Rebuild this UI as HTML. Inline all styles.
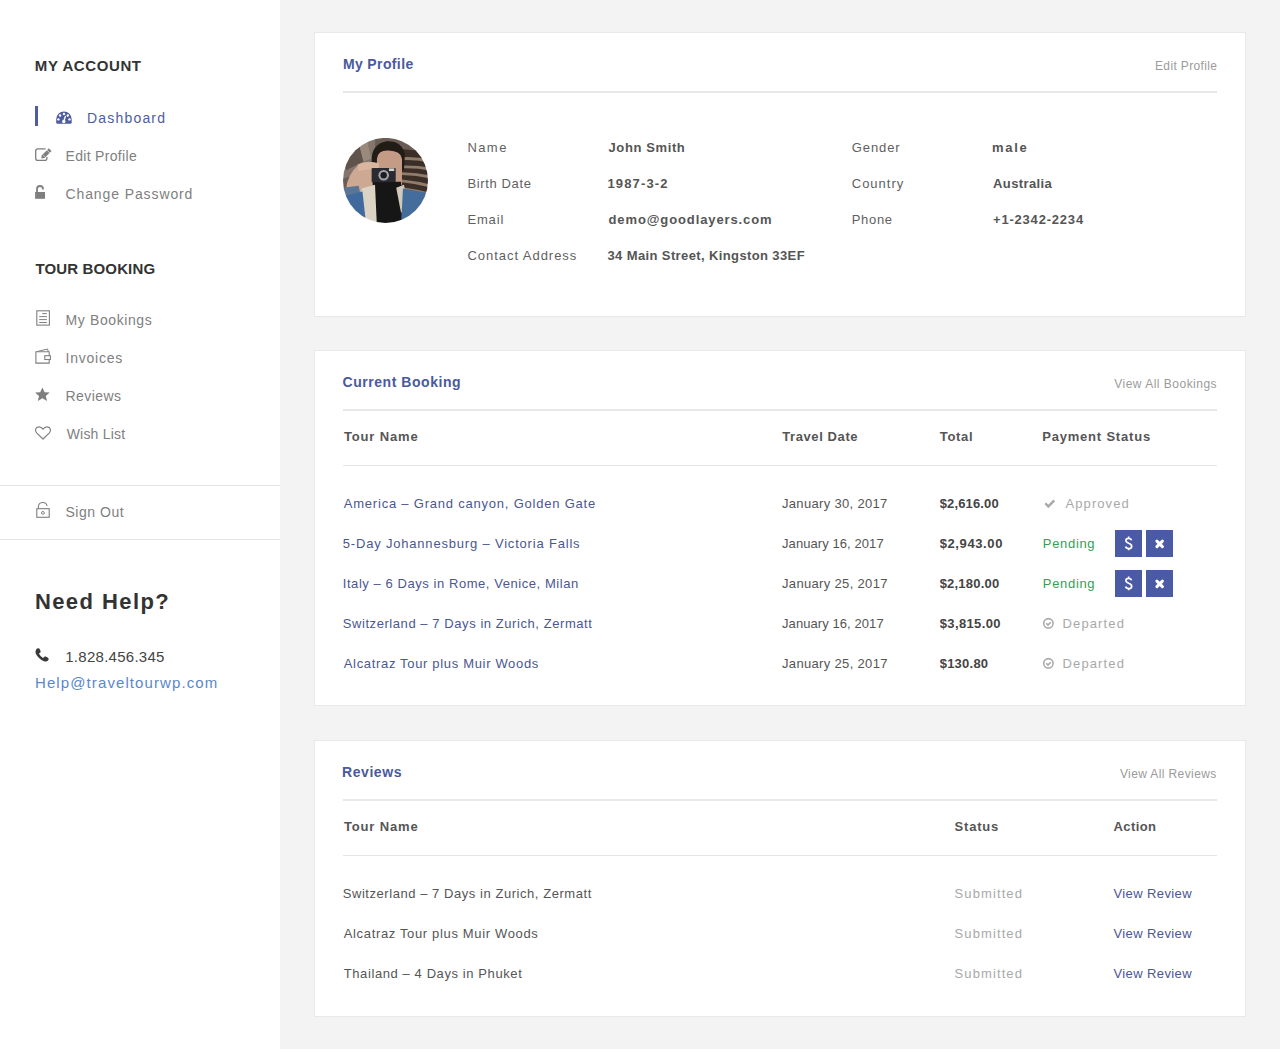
<!DOCTYPE html>
<html><head><meta charset="utf-8"><title>Dashboard</title>
<style>
html,body{margin:0;padding:0}
body{width:1280px;height:1049px;overflow:hidden;background:#f3f3f3;position:relative;font-family:"Liberation Sans",sans-serif}
.t{position:absolute;white-space:nowrap;line-height:1}
.i{position:absolute}
.sb{position:absolute;left:0;top:0;width:280px;height:1049px;background:#fff}
.hl{position:absolute;left:0;width:280px;height:1px;background:#e4e4e4}
.card{position:absolute;left:314px;width:930px;background:#fff;border:1px solid #e9e9e9}
.ln2{position:absolute;left:343px;width:874px;height:2px;background:#e8e8e8}
.ln1{position:absolute;left:343px;width:874px;height:1px;background:#e6e6e6}
</style></head><body>

<div class="sb"></div>
<div class="hl" style="top:485px"></div>
<div class="hl" style="top:539px"></div>
<div class="card" style="top:32px;height:283px"></div>
<div class="card" style="top:350px;height:354px"></div>
<div class="card" style="top:740px;height:275px"></div>
<div class="ln2" style="top:91px"></div>
<div class="ln2" style="top:409px"></div>
<div class="ln1" style="top:465px"></div>
<div class="ln2" style="top:799px"></div>
<div class="ln1" style="top:855px"></div>


<svg class="i" style="left:343px;top:138px" width="85" height="85" viewBox="88 85 882 882">
 <defs><clipPath id="cc"><circle cx="529" cy="525" r="441"/></clipPath><filter id="bl" x="-5%" y="-5%" width="110%" height="110%"><feGaussianBlur stdDeviation="7"/></filter></defs>
 <g clip-path="url(#cc)"><g filter="url(#bl)">
  <rect x="0" y="0" width="1100" height="1100" fill="#6a5d55"/>
  <path d="M60 60 L420 60 L420 380 L60 520 Z" fill="#84766c"/>
  <path d="M90 250 L260 170 L300 330 L120 420 Z" fill="#5e524b"/>
  <path d="M240 90 L330 80 L380 300 L300 330 Z" fill="#9a8a7e"/>
  <path d="M690 200 L1000 230 L1000 800 L690 720 Z" fill="#3a2d28"/>
  <g stroke="#8f7b6b" stroke-width="30"><path d="M700 300 Q850 290 1000 330"/><path d="M700 385 Q850 380 1000 410"/><path d="M700 455 Q850 460 1000 490"/><path d="M700 530 Q850 545 1000 585"/><path d="M700 610 Q850 630 1000 670"/></g>
  <path d="M385 330 Q380 150 540 120 Q700 110 730 260 L720 420 L395 420 Z" fill="#221a18"/>
  <path d="M440 300 Q450 210 560 215 Q690 220 700 300 L700 570 L440 570 Z" fill="#c49c86"/>
  <path d="M120 620 Q130 470 250 360 Q330 310 450 350 L470 560 Q360 610 250 660 Z" fill="#cda892"/>
  <path d="M240 360 Q330 320 460 345 L460 420 Q350 400 250 430 Z" fill="#d8b6a0"/>
  <path d="M88 600 L250 580 L280 720 L88 760 Z" fill="#5a7596"/>
  <path d="M395 540 L690 540 L700 1000 L420 1000 Z" fill="#141416"/>
  <path d="M280 610 L420 570 L440 1000 L300 1000 Z" fill="#dcd3c4"/>
  <path d="M640 600 L720 570 L770 820 L690 860 Z" fill="#d2c9b9"/>
  <path d="M60 700 L290 640 L330 1000 L60 1000 Z" fill="#3f6b9d"/>
  <path d="M710 610 L1000 660 L1000 1000 L690 1000 Z" fill="#446d9c"/>
  <rect x="385" y="395" width="250" height="150" rx="10" fill="#2a2a30"/>
  <rect x="565" y="400" width="55" height="28" fill="#d2d2d2"/>
  <circle cx="510" cy="472" r="55" fill="#a4a4a8"/>
  <circle cx="510" cy="472" r="33" fill="#1c1c20"/>
 </g></g>
</svg>


<svg class="i" style="left:0;top:0" width="1280" height="1049" viewBox="0 0 1280 1049">
 <!-- active bar -->
 <rect x="35" y="106" width="3" height="20" fill="#4e5d9f"/>
 <!-- dashboard gauge -->
 <path d="M56.2 119.3 A7.75 7.75 0 0 1 71.7 119.3 V122.6 Q71.7 123.8 70.5 123.8 H57.4 Q56.2 123.8 56.2 122.6 Z" fill="#4e5d9f"/>
 <g fill="#fff"><circle cx="63.95" cy="113.9" r="1.2"/><circle cx="60.1" cy="115.5" r="1.2"/><circle cx="67.8" cy="115.5" r="1.2"/><circle cx="58.4" cy="119.4" r="1.2"/><circle cx="69.5" cy="119.4" r="1.2"/><circle cx="63.8" cy="121.5" r="1.7"/></g>
 <path d="M63.8 121.3 L65.4 116.3" stroke="#fff" stroke-width="1.3" stroke-linecap="round"/>
 <!-- edit -->
 <path d="M45.6 148.9 H37.9 A2.2 2.2 0 0 0 35.7 151.1 V158.2 A2.2 2.2 0 0 0 37.9 160.4 H44.7 A2.2 2.2 0 0 0 46.9 158.2 V157" fill="none" stroke="#7f7f7f" stroke-width="1.3"/>
 <path d="M41.2 158.6 L41.86 155.26 L48.86 148.26 L51.54 150.94 L44.54 157.94 Z" fill="#7f7f7f"/>
 <path d="M46.9 150.1 L49.7 152.9" stroke="#fff" stroke-width="0.7"/><path d="M42.6 154.5 L45.3 157.2" stroke="#fff" stroke-width="0.5"/>
 <!-- unlock filled -->
 <rect x="35.1" y="192" width="9.9" height="6.8" fill="#7f7f7f"/>
 <path d="M37 192.3 V189 A3 3 0 0 1 43 189 V189.6" fill="none" stroke="#7f7f7f" stroke-width="1.8"/>
 <!-- bookings file -->
 <rect x="36.8" y="310.8" width="12.6" height="14.3" fill="none" stroke="#7f7f7f" stroke-width="1.1"/>
 <g stroke="#7f7f7f" stroke-width="1"><path d="M42.2 313.6 H46.9"/><path d="M39.2 316.6 H46.9"/><path d="M39.2 319.6 H46.9"/><path d="M39.2 322.5 H46.9"/></g>
 <!-- wallet -->
 <path d="M49.2 355.6 V351.7 H35.9 V363.1 H49.2 V359.4" fill="none" stroke="#7f7f7f" stroke-width="1.1"/>
 <path d="M37 351.6 L47.6 349 L48.2 351.6" fill="none" stroke="#7f7f7f" stroke-width="1"/>
 <rect x="44.8" y="355.7" width="5.6" height="3.8" fill="none" stroke="#7f7f7f" stroke-width="1.1"/>
 <!-- star -->
 <path d="M42.4 387.4 L44.6 392.2 L49.7 392.6 L45.8 395.9 L47 401.1 L42.4 398.3 L37.8 401.1 L39 395.9 L35.1 392.6 L40.2 392.2 Z" fill="#7f7f7f"/>
 <!-- heart -->
 <path d="M43 439 L36.6 432.9 C34.6 430.9 35.4 427 38.8 426.8 C40.8 426.7 42.2 428 43 429.2 C43.8 428 45.2 426.7 47.2 426.8 C50.6 427 51.4 430.9 49.4 432.9 Z" fill="none" stroke="#7f7f7f" stroke-width="1.2" stroke-linejoin="round"/>
 <!-- sign out -->
 <rect x="36.8" y="508.7" width="12.4" height="8.6" fill="none" stroke="#7f7f7f" stroke-width="1.1"/>
 <path d="M38.4 508.5 V506.6 A4.4 4.4 0 0 1 47.1 506" fill="none" stroke="#7f7f7f" stroke-width="1.1"/>
 <circle cx="42.9" cy="512.9" r="1.4" fill="none" stroke="#7f7f7f" stroke-width="1"/>
 <!-- phone -->
 <g fill="#3a3a3a">
  <path d="M36.3 649.2 Q37.5 647.6 39.3 648.6 L40.6 650.9 Q41 652.2 39.6 653.1 L38.9 653.6 Q40.3 656.6 43 658.1 L43.6 657.4 Q44.5 656.1 45.8 656.6 L48.3 658 Q49.3 659.2 48 660.6 Q46.5 662.1 44 661.3 Q38.5 659 35.7 653.5 Q35 651 36.3 649.2 Z"/>
 </g>
 <!-- approved check -->
 <path d="M1045.3 503.2 L1048.3 506.4 L1054.3 500.3" fill="none" stroke="#a9a9a9" stroke-width="2.4"/>
 <!-- departed -->
 <g fill="none" stroke="#a9a9a9"><circle cx="1048.4" cy="623.3" r="4.7" stroke-width="1.6"/><path d="M1046.3 623.3 L1048 625 L1050.7 622.2" stroke-width="1.6"/>
 <circle cx="1048.4" cy="663.3" r="4.7" stroke-width="1.6"/><path d="M1046.3 663.3 L1048 665 L1050.7 662.2" stroke-width="1.6"/></g>
 <!-- buttons -->
 <g fill="#4a5aa5"><rect x="1115" y="530" width="27" height="27"/><rect x="1146" y="530" width="27" height="27"/><rect x="1115" y="570" width="27" height="27"/><rect x="1146" y="570" width="27" height="27"/></g>
 <path d="M1131.6 540.2 C1131.2 538.9 1130 538.3 1128.7 538.3 C1127 538.3 1125.9 539.2 1125.9 540.5 C1125.9 542.0 1127.2 542.6 1128.7 543.2 C1130.4 543.8 1131.7 544.5 1131.7 546.2 C1131.7 547.6 1130.5 548.6 1128.7 548.6 C1127.2 548.6 1126 547.9 1125.6 546.6 M1128.7 536.6 V538.4 M1128.7 548.5 V550.3" fill="none" stroke="#fff" stroke-width="1.7"/>
 <path d="M1131.6 580.2 C1131.2 578.9 1130 578.3 1128.7 578.3 C1127 578.3 1125.9 579.2 1125.9 580.5 C1125.9 582.0 1127.2 582.6 1128.7 583.2 C1130.4 583.8 1131.7 584.5 1131.7 586.2 C1131.7 587.6 1130.5 588.6 1128.7 588.6 C1127.2 588.6 1126 587.9 1125.6 586.6 M1128.7 576.6 V578.4 M1128.7 588.5 V590.3" fill="none" stroke="#fff" stroke-width="1.7"/>
 <g stroke="#fff" stroke-width="3" stroke-linecap="round"><path d="M1156.9 541.1 L1162.4 546.6 M1162.4 541.1 L1156.9 546.6"/><path d="M1156.9 581.1 L1162.4 586.6 M1162.4 581.1 L1156.9 586.6"/></g>
</svg>

<div class="t" style="left:34.80px;top:58px;font-size:15px;font-weight:700;color:#333333;letter-spacing:0.600px">MY ACCOUNT</div><div class="t" style="left:87.00px;top:111px;font-size:14px;font-weight:400;color:#4e5d9f;letter-spacing:1.188px">Dashboard</div><div class="t" style="left:65.50px;top:149px;font-size:14px;font-weight:400;color:#808080;letter-spacing:0.318px">Edit Profile</div><div class="t" style="left:65.50px;top:187px;font-size:14px;font-weight:400;color:#808080;letter-spacing:0.893px">Change Password</div><div class="t" style="left:35.50px;top:261px;font-size:15px;font-weight:700;color:#333333;letter-spacing:0.136px">TOUR BOOKING</div><div class="t" style="left:65.60px;top:313px;font-size:14px;font-weight:400;color:#808080;letter-spacing:0.600px">My Bookings</div><div class="t" style="left:65.50px;top:351px;font-size:14px;font-weight:400;color:#808080;letter-spacing:0.786px">Invoices</div><div class="t" style="left:65.50px;top:389px;font-size:14px;font-weight:400;color:#808080;letter-spacing:0.417px">Reviews</div><div class="t" style="left:66.70px;top:427px;font-size:14px;font-weight:400;color:#808080;letter-spacing:0.200px">Wish List</div><div class="t" style="left:65.40px;top:505px;font-size:14px;font-weight:400;color:#808080;letter-spacing:0.543px">Sign Out</div><div class="t" style="left:34.90px;top:591px;font-size:22px;font-weight:700;color:#333333;letter-spacing:1.422px">Need Help?</div><div class="t" style="left:65.25px;top:649px;font-size:15px;font-weight:400;color:#444444;letter-spacing:0.271px">1.828.456.345</div><div class="t" style="left:35.00px;top:675px;font-size:15px;font-weight:400;color:#5b87cc;letter-spacing:1.100px">Help@traveltourwp.com</div><div class="t" style="left:342.90px;top:57px;font-size:14px;font-weight:700;color:#4a5a9c;letter-spacing:0.378px">My Profile</div><div class="t" style="left:1155.00px;top:60px;font-size:12px;font-weight:400;color:#9b9b9b;letter-spacing:0.364px">Edit Profile</div><div class="t" style="left:467.40px;top:141px;font-size:13px;font-weight:400;color:#5f5f5f;letter-spacing:1.433px">Name</div><div class="t" style="left:608.50px;top:141px;font-size:13px;font-weight:700;color:#555555;letter-spacing:0.611px">John Smith</div><div class="t" style="left:467.40px;top:177px;font-size:13px;font-weight:400;color:#5f5f5f;letter-spacing:0.633px">Birth Date</div><div class="t" style="left:607.50px;top:177px;font-size:13px;font-weight:700;color:#555555;letter-spacing:1.129px">1987-3-2</div><div class="t" style="left:467.40px;top:213px;font-size:13px;font-weight:400;color:#5f5f5f;letter-spacing:0.850px">Email</div><div class="t" style="left:608.50px;top:213px;font-size:13px;font-weight:700;color:#555555;letter-spacing:0.894px">demo@goodlayers.com</div><div class="t" style="left:467.40px;top:249px;font-size:13px;font-weight:400;color:#5f5f5f;letter-spacing:0.968px">Contact Address</div><div class="t" style="left:607.50px;top:249px;font-size:13px;font-weight:700;color:#555555;letter-spacing:0.382px">34 Main Street, Kingston 33EF</div><div class="t" style="left:851.75px;top:141px;font-size:13px;font-weight:400;color:#5f5f5f;letter-spacing:0.910px">Gender</div><div class="t" style="left:992.00px;top:141px;font-size:13px;font-weight:700;color:#555555;letter-spacing:1.700px">male</div><div class="t" style="left:851.75px;top:177px;font-size:13px;font-weight:400;color:#5f5f5f;letter-spacing:0.992px">Country</div><div class="t" style="left:993.00px;top:177px;font-size:13px;font-weight:700;color:#555555;letter-spacing:0.400px">Australia</div><div class="t" style="left:851.75px;top:213px;font-size:13px;font-weight:400;color:#5f5f5f;letter-spacing:0.688px">Phone</div><div class="t" style="left:993.00px;top:213px;font-size:13px;font-weight:700;color:#555555;letter-spacing:0.800px">+1-2342-2234</div><div class="t" style="left:342.50px;top:375px;font-size:14px;font-weight:700;color:#4a5a9c;letter-spacing:0.550px">Current Booking</div><div class="t" style="left:1114.25px;top:378px;font-size:12px;font-weight:400;color:#9b9b9b;letter-spacing:0.491px">View All Bookings</div><div class="t" style="left:344.00px;top:430px;font-size:13px;font-weight:700;color:#555555;letter-spacing:0.837px">Tour Name</div><div class="t" style="left:782.20px;top:430px;font-size:13px;font-weight:700;color:#555555;letter-spacing:0.600px">Travel Date</div><div class="t" style="left:939.70px;top:430px;font-size:13px;font-weight:700;color:#555555;letter-spacing:0.725px">Total</div><div class="t" style="left:1042.20px;top:430px;font-size:13px;font-weight:700;color:#555555;letter-spacing:0.800px">Payment Status</div><div class="t" style="left:343.75px;top:497px;font-size:13px;font-weight:400;color:#4b5790;letter-spacing:0.787px">America – Grand canyon, Golden Gate</div><div class="t" style="left:782.00px;top:497px;font-size:13px;font-weight:400;color:#555555;letter-spacing:0.320px">January 30, 2017</div><div class="t" style="left:939.70px;top:497px;font-size:13px;font-weight:700;color:#444444;letter-spacing:0.144px">$2,616.00</div><div class="t" style="left:342.75px;top:537px;font-size:13px;font-weight:400;color:#4b5790;letter-spacing:0.810px">5-Day Johannesburg – Victoria Falls</div><div class="t" style="left:782.00px;top:537px;font-size:13px;font-weight:400;color:#555555;letter-spacing:0.080px">January 16, 2017</div><div class="t" style="left:939.70px;top:537px;font-size:13px;font-weight:700;color:#444444;letter-spacing:0.612px">$2,943.00</div><div class="t" style="left:342.75px;top:577px;font-size:13px;font-weight:400;color:#4b5790;letter-spacing:0.560px">Italy – 6 Days in Rome, Venice, Milan</div><div class="t" style="left:782.00px;top:577px;font-size:13px;font-weight:400;color:#555555;letter-spacing:0.333px">January 25, 2017</div><div class="t" style="left:939.70px;top:577px;font-size:13px;font-weight:700;color:#444444;letter-spacing:0.200px">$2,180.00</div><div class="t" style="left:342.75px;top:617px;font-size:13px;font-weight:400;color:#4b5790;letter-spacing:0.567px">Switzerland – 7 Days in Zurich, Zermatt</div><div class="t" style="left:782.00px;top:617px;font-size:13px;font-weight:400;color:#555555;letter-spacing:0.080px">January 16, 2017</div><div class="t" style="left:939.70px;top:617px;font-size:13px;font-weight:700;color:#444444;letter-spacing:0.375px">$3,815.00</div><div class="t" style="left:343.75px;top:657px;font-size:13px;font-weight:400;color:#4b5790;letter-spacing:0.670px">Alcatraz Tour plus Muir Woods</div><div class="t" style="left:782.00px;top:657px;font-size:13px;font-weight:400;color:#555555;letter-spacing:0.333px">January 25, 2017</div><div class="t" style="left:939.70px;top:657px;font-size:13px;font-weight:700;color:#444444;letter-spacing:0.233px">$130.80</div><div class="t" style="left:1065.50px;top:497px;font-size:13px;font-weight:400;color:#a9a9a9;letter-spacing:1.086px">Approved</div><div class="t" style="left:1042.80px;top:537px;font-size:13px;font-weight:400;color:#34a052;letter-spacing:0.683px">Pending</div><div class="t" style="left:1042.80px;top:577px;font-size:13px;font-weight:400;color:#34a052;letter-spacing:0.683px">Pending</div><div class="t" style="left:1062.50px;top:617px;font-size:13px;font-weight:400;color:#a9a9a9;letter-spacing:1.129px">Departed</div><div class="t" style="left:1062.50px;top:657px;font-size:13px;font-weight:400;color:#a9a9a9;letter-spacing:1.129px">Departed</div><div class="t" style="left:342.00px;top:765px;font-size:14px;font-weight:700;color:#4a5a9c;letter-spacing:0.567px">Reviews</div><div class="t" style="left:1119.90px;top:768px;font-size:12px;font-weight:400;color:#9b9b9b;letter-spacing:0.393px">View All Reviews</div><div class="t" style="left:344.00px;top:820px;font-size:13px;font-weight:700;color:#555555;letter-spacing:0.837px">Tour Name</div><div class="t" style="left:954.60px;top:820px;font-size:13px;font-weight:700;color:#555555;letter-spacing:0.800px">Status</div><div class="t" style="left:1113.50px;top:820px;font-size:13px;font-weight:700;color:#555555;letter-spacing:0.400px">Action</div><div class="t" style="left:342.75px;top:887px;font-size:13px;font-weight:400;color:#555555;letter-spacing:0.551px">Switzerland – 7 Days in Zurich, Zermatt</div><div class="t" style="left:954.60px;top:887px;font-size:13px;font-weight:400;color:#a9a9a9;letter-spacing:1.100px">Submitted</div><div class="t" style="left:1113.50px;top:887px;font-size:13px;font-weight:400;color:#4b5790;letter-spacing:0.390px">View Review</div><div class="t" style="left:343.75px;top:927px;font-size:13px;font-weight:400;color:#555555;letter-spacing:0.652px">Alcatraz Tour plus Muir Woods</div><div class="t" style="left:954.60px;top:927px;font-size:13px;font-weight:400;color:#a9a9a9;letter-spacing:1.100px">Submitted</div><div class="t" style="left:1113.50px;top:927px;font-size:13px;font-weight:400;color:#4b5790;letter-spacing:0.390px">View Review</div><div class="t" style="left:343.75px;top:967px;font-size:13px;font-weight:400;color:#555555;letter-spacing:0.594px">Thailand – 4 Days in Phuket</div><div class="t" style="left:954.60px;top:967px;font-size:13px;font-weight:400;color:#a9a9a9;letter-spacing:1.100px">Submitted</div><div class="t" style="left:1113.50px;top:967px;font-size:13px;font-weight:400;color:#4b5790;letter-spacing:0.390px">View Review</div>

</body></html>
